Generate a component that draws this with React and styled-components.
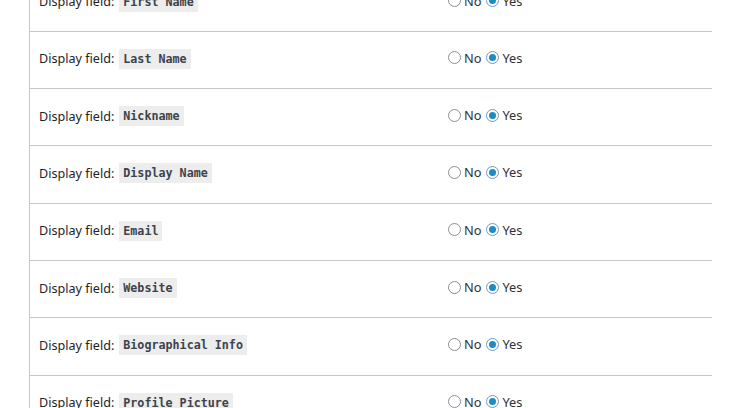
import React from "react";
import styled, { createGlobalStyle } from "styled-components";

const GlobalStyle = createGlobalStyle`
  html, body {
    margin: 0;
    padding: 0;
    background: #ffffff;
    overflow: hidden;
  }
  body {
    font-family: "Noto Sans", "Open Sans", sans-serif;
    color: #1d2327;
  }
`;

const Page = styled.div`
  width: 742px;
  height: 408px;
  overflow: hidden;
`;

const Table = styled.div`
  margin: -25.67px 0 0 29px;
  width: 682px;
  border-left: 1px solid #c8c8c8;
`;

const Row = styled.div`
  display: grid;
  grid-template-columns: 413px 1fr;
  align-items: center;
  box-sizing: border-box;
  height: 57.33px;
  padding-bottom: 2px;
  border-bottom: 1px solid #c8c8c8;
`;

const Label = styled.div`
  padding-left: 9px;
  font-size: 12.6px;
  display: flex;
  align-items: center;
`;

const Code = styled.code`
  font-family: "DejaVu Sans Mono", "Liberation Mono", monospace;
  font-size: 11.7px;
  font-weight: bold;
  background: #ededed;
  color: #3c434a;
  padding: 3px 4px 3px;
  margin-left: 5px;
`;

const Options = styled.div`
  display: flex;
  align-items: center;
  font-size: 12.8px;
  padding-bottom: 2px;
`;

const Radio = styled.span`
  box-sizing: border-box;
  width: 13px;
  height: 13px;
  border-radius: 50%;
  border: 1px solid ${(p) => (p.$checked ? "#6a9ccc" : "#8c8f94")};
  margin: 0 3px 0 5px;
  display: inline-flex;
  align-items: center;
  justify-content: center;
  background: #fff;

  &::after {
    content: "";
    width: 7px;
    height: 7px;
    border-radius: 50%;
    background: ${(p) => (p.$checked ? "#1e8cbe" : "transparent")};
  }
`;

const Choice = styled.label`
  display: inline-flex;
  align-items: center;
  color: #2c3338;
`;

const fields = [
  "First Name",
  "Last Name",
  "Nickname",
  "Display Name",
  "Email",
  "Website",
  "Biographical Info",
  "Profile Picture",
];

export default function App() {
  return (
    <Page>
      <GlobalStyle />
      <Table>
        {fields.map((f) => (
          <Row key={f}>
            <Label>
              Display field: <Code>{f}</Code>
            </Label>
            <Options>
              <Choice>
                <Radio />
                No
              </Choice>
              <Choice>
                <Radio $checked />
                Yes
              </Choice>
            </Options>
          </Row>
        ))}
      </Table>
    </Page>
  );
}
